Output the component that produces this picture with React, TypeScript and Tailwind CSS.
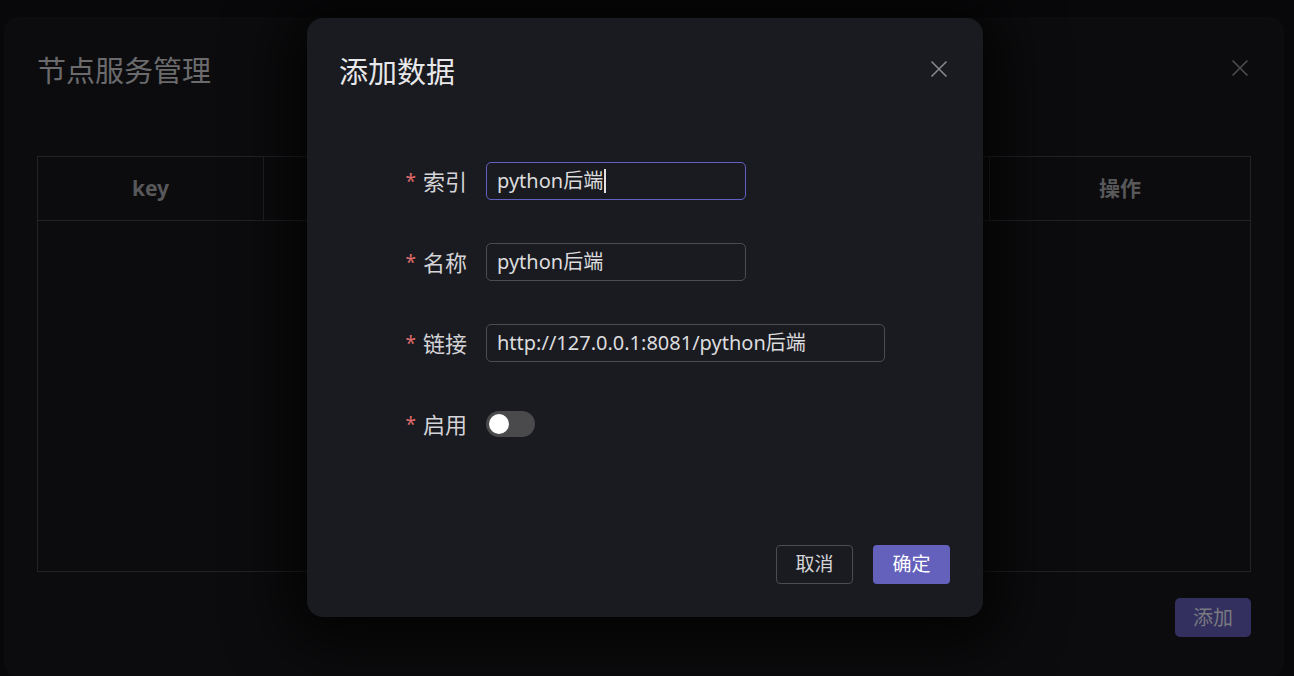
// ── Form rows ─────────────────────────────────────────────────────────────────
const FIELDS = [
  { label: '索引', value: 'python后端', width: 'w-[260px]', focused: true },
  { label: '名称', value: 'python后端', width: 'w-[260px]', focused: false },
  { label: '链接', value: 'http://127.0.0.1:8081/python后端', width: 'w-[399px]', focused: false },
]

const FONT = "font-['Noto_Sans','Noto_Sans_CJK_SC',sans-serif]"

function CloseIcon({ className }: { className: string }) {
  return (
    <svg width="18" height="18" viewBox="0 0 18 18" className={className}>
      <path d="M1.5 1.5 L16.5 16.5 M16.5 1.5 L1.5 16.5" stroke="currentColor" strokeWidth="1.5" fill="none" />
    </svg>
  )
}

function Label({ text }: { text: string }) {
  return (
    <div className="w-[179px] shrink-0 flex items-center justify-end pr-[19px] text-[22px] text-[#d4d4d8]">
      <span className="text-[#e06c6c] text-[19px] mr-[7px] leading-none">*</span>
      {text}
    </div>
  )
}

// ── Add dialog ────────────────────────────────────────────────────────────────
function AddDialog() {
  return (
    <div className="absolute left-[307px] top-[18px] w-[676px] h-[599px] rounded-[16px] bg-[#1a1b20]
                    shadow-[0_8px_60px_20px_rgba(0,0,0,0.75)] flex flex-col">
      {/* Header */}
      <div className="flex items-center justify-between pl-[32px] pr-[35px] pt-[35px]">
        <span className="text-[29px] leading-[38px] text-[#e8e8ea]">添加数据</span>
        <CloseIcon className="text-[#8a8a8e] -mt-[6px]" />
      </div>

      {/* Body */}
      <div className="flex flex-col pt-[71px] gap-[43px]">
        {FIELDS.map(f => (
          <div key={f.label} className="flex items-center h-[38px]">
            <Label text={f.label} />
            <div
              className={[
                f.width,
                'h-[38px] rounded-[5px] border flex items-center pl-[10px] text-[20px] text-[#dcdcde]',
                f.focused ? 'border-[#6461c4]' : 'border-[#4b4b50]',
              ].join(' ')}
            >
              {f.value}
              {f.focused && <span className="w-[1.5px] h-[24px] bg-[#e0e0e0] ml-[1px]" />}
            </div>
          </div>
        ))}

        <div className="flex items-center h-[38px]">
          <Label text="启用" />
          <div className="w-[49px] h-[26px] rounded-full bg-[#4a4a4c] flex items-center pl-[3px]">
            <span className="w-[20px] h-[20px] rounded-full bg-white" />
          </div>
        </div>
      </div>

      {/* Footer */}
      <div className="mt-auto flex justify-end gap-[20px] pr-[33px] pb-[33px]">
        <button className="w-[77px] h-[39px] rounded-[4px] border border-[#4b4b50] text-[19px] text-[#d4d4d8]">
          取消
        </button>
        <button className="w-[77px] h-[39px] rounded-[4px] bg-[#6461bd] text-[19px] text-white">
          确定
        </button>
      </div>
    </div>
  )
}

// ── Root ──────────────────────────────────────────────────────────────────────
export default function App() {
  return (
    <div className={`relative w-[1294px] h-[676px] overflow-hidden bg-[#08080a] ${FONT}`}>
      {/* Background dialog (dimmed) */}
      <div className="ml-[4px] mt-[17px] w-[1280px] h-[660px] rounded-[14px] bg-[#0c0c0e] flex flex-col px-[33px]">
        <div className="flex items-center justify-between pt-[35px]">
          <span className="text-[29px] leading-[38px] text-[#6b6b6d]">节点服务管理</span>
          <CloseIcon className="text-[#4e4e50] mr-[2px] -mt-[6px]" />
        </div>

        <div className="mt-[66px] h-[416px] border border-[#232326] flex flex-col">
          <div className="h-[64px] shrink-0 flex border-b border-[#232326] text-[21px] font-bold text-[#58585a]">
            <div className="w-[226px] flex items-center justify-center border-r border-[#232326]">key</div>
            <div className="flex-1 border-r border-[#232326]" />
            <div className="w-[260px] flex items-center justify-center">操作</div>
          </div>
          <div className="flex-1" />
        </div>

        <div className="flex justify-end mt-[26px]">
          <button className="w-[76px] h-[39px] rounded-[5px] bg-[#33305f] text-[20px] text-[#7a7a80]">
            添加
          </button>
        </div>
      </div>

      <AddDialog />
    </div>
  )
}
